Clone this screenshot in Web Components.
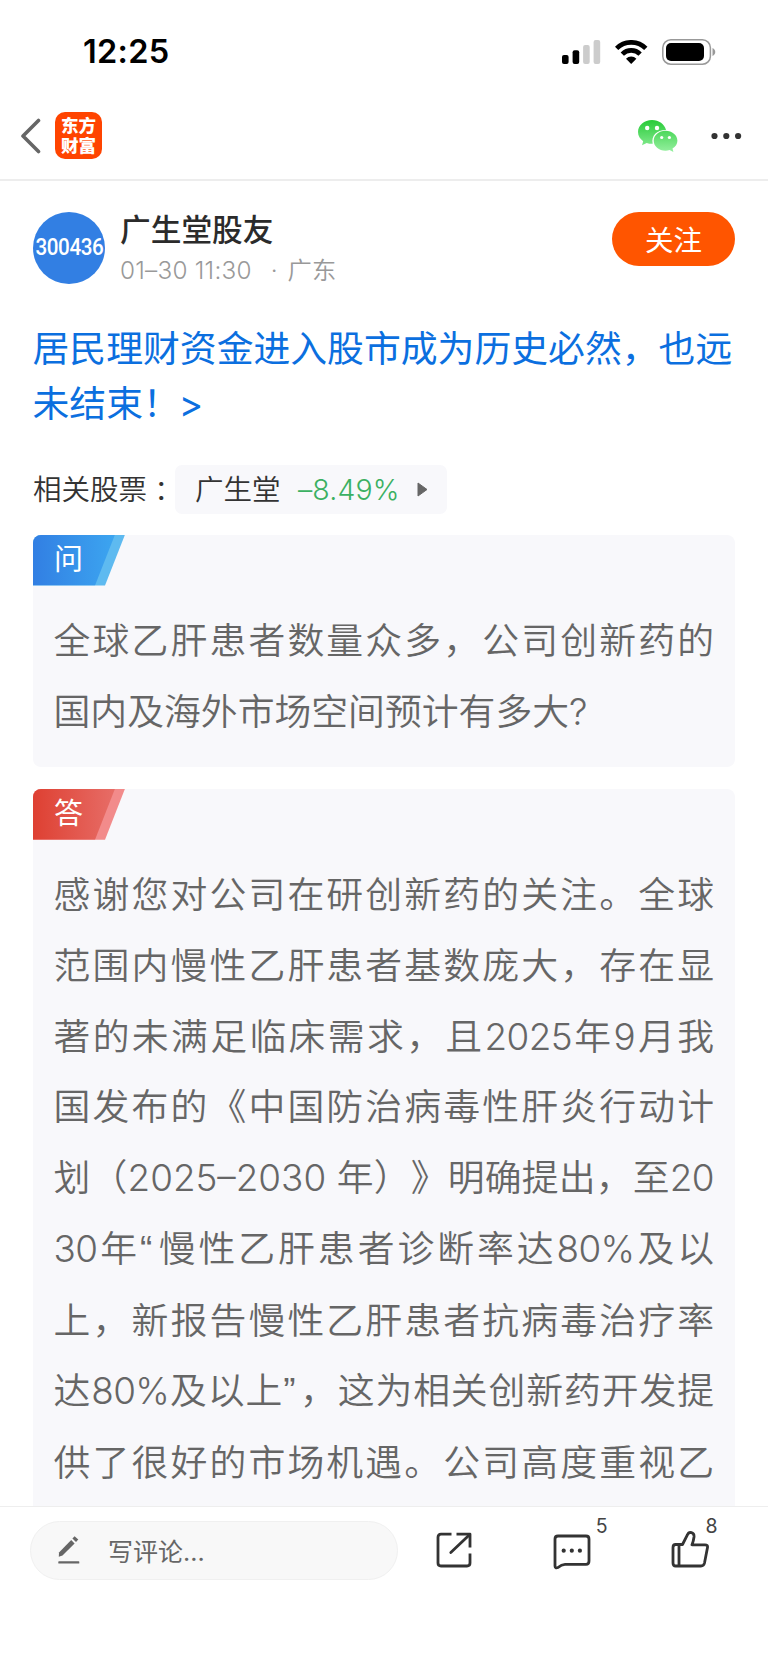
<!DOCTYPE html>
<html lang="zh-CN">
<head>
<meta charset="utf-8">
<meta name="viewport" content="width=device-width">
<title>广生堂股友</title>
<style>
  body {
    margin: 0;
    background: #fff;
    font-family: Inter, "Noto Sans CJK SC", sans-serif;
    color: #333;
    text-spacing-trim: space-all;
  }
  /* curly quotes and tighter figures inside the article text */
  .q {
    font-family: "Liberation Sans", sans-serif;
    letter-spacing: 3.5px;
  }
  .n { letter-spacing: -.6px; }
</style>
</head>
<body>
<post-page>
  <status-bar slot="top" time="12:25"></status-bar>
  <nav-bar slot="top"></nav-bar>
  <author-row code="300436" name="广生堂股友" date="01–30 11:30" place="广东"></author-row>
  <post-title>
    <div>居民理财资金进入股市成为历史必然，也远</div>
    <div>未结束！<span style="margin-left:-1px">&gt;</span></div>
  </post-title>
  <stock-row name="广生堂" change="–8.49%"></stock-row>
  <qa-card kind="ask" label="问">
    <div>全球乙肝患者数量众多，公司创新药的</div>
    <div class="end">国内及海外市场空间预计有多大?</div>
  </qa-card>
  <qa-card kind="answer" label="答">
    <div>感谢您对公司在研创新药的关注。全球</div>
    <div>范围内慢性乙肝患者基数庞大，存在显</div>
    <div>著的未满足临床需求，且<span class="n">2025</span>年9月我</div>
    <div>国发布的《中国防治病毒性肝炎行动计</div>
    <div>划（2025–2030 年）》明确提出，至<span class="n">20</span></div>
    <div><span class="n">30</span>年<span class="q">“</span>慢性乙肝患者诊断率达<span class="n">80%</span>及以</div>
    <div>上，新报告慢性乙肝患者抗病毒治疗率</div>
    <div>达<span class="n">80%</span>及以上<span class="q">”</span>，这为相关创新药开发提</div>
    <div>供了很好的市场机遇。公司高度重视乙</div>
  </qa-card>
  <comment-bar slot="bottom" comments="5" likes="8"></comment-bar>
</post-page>

<script>
class PostPage extends HTMLElement {
  constructor() {
    super();
    this.attachShadow({ mode: 'open' }).innerHTML = `<style>
      :host {
        display: flex;
        flex-direction: column;
        width: 768px;
        height: 1663px;
        overflow: hidden;
      }
      main {
        flex: 1;
        min-height: 0;
        overflow: hidden;
        padding: 31px 33px 0;
      }
    </style>
    <slot name="top"></slot>
    <main><slot></slot></main>
    <slot name="bottom"></slot>`;
  }
}

class StatusBar extends HTMLElement {
  connectedCallback() {
    this.attachShadow({ mode: 'open' }).innerHTML = `<style>
      :host {
        display: flex;
        align-items: center;
        justify-content: space-between;
        box-sizing: border-box;
        height: 103px;
        padding: 0 52px 0 83px;
        color: #000;
      }
      time {
        font-size: 32.5px;
        font-weight: 600;
        letter-spacing: .3px;
      }
      .icons {
        display: flex;
        align-items: center;
      }
      svg { display: block; }
      .wifi { margin: 0 14.5px; }
    </style>
    <time>${this.getAttribute('time')}</time>
    <div class="icons">
      <svg width="38.5" height="24" viewBox="0 0 38.5 24">
        <rect y="15" width="6.6" height="9" rx="2"/>
        <rect x="10.6" y="10.3" width="6.6" height="13.7" rx="2"/>
        <g fill="#ccc">
          <rect x="21.1" y="5" width="6.6" height="19" rx="2"/>
          <rect x="31.6" width="6.6" height="24" rx="2"/>
        </g>
      </svg>
      <svg class="wifi" width="32.4" height="24" viewBox="0 0 32.4 24">
        <g fill="none" stroke="#000" stroke-width="4.7">
          <path d="M1.6 8.4A20.6 20.6 0 0 1 30.8 8.4"/>
          <path d="M7.3 14.1A12.6 12.6 0 0 1 25.1 14.1"/>
        </g>
        <path d="M16.2 24L11 18.7A7.4 7.4 0 0 1 21.4 18.7Z"/>
      </svg>
      <svg width="54" height="26" viewBox="0 0 54 26">
        <rect x=".8" y=".8" width="47.6" height="24.4" rx="8" fill="none" stroke="#999" stroke-width="1.5"/>
        <rect x="4" y="4" width="38" height="18" rx="5"/>
        <path d="M50.5 9C54.2 10.4 54.2 15.6 50.5 17Z" fill="#999"/>
      </svg>
    </div>`;
  }
}

class NavBar extends HTMLElement {
  constructor() {
    super();
    this.attachShadow({ mode: 'open' }).innerHTML = `<style>
      :host {
        display: flex;
        align-items: center;
        box-sizing: border-box;
        height: 78px;
        padding: 2px 26px 12px 20px;
        border-bottom: 2px solid #ededed;
      }
      svg { display: block; }
      .logo {
        box-sizing: border-box;
        width: 47px;
        height: 47px;
        margin: -1px auto 0 14px;
        padding: 3px 5.5px 0 6px;
        border-radius: 10px;
        background: #ff4400;
        color: #fff;
        font: 900 17.5px/19.5px "Noto Sans CJK SC", sans-serif;
        word-break: break-all;
      }
      .more { margin-left: 33px; }
    </style>
    <svg width="21" height="36" viewBox="0 0 21 36">
      <path d="M18.5 2.5L3 18L18.5 33.5" fill="none" stroke="#666" stroke-width="3.6" stroke-linecap="round" stroke-linejoin="round"/>
    </svg>
    <div class="logo">东方财富</div>
    <svg width="40" height="32" viewBox="0 0 40 32">
      <defs>
        <linearGradient id="wx" gradientUnits="userSpaceOnUse" x1="0" y1="0" x2="0" y2="32">
          <stop offset="0" stop-color="#28cb38"/>
          <stop offset="1" stop-color="#96f0a0"/>
        </linearGradient>
      </defs>
      <path fill="url(#wx)" d="M14 0C6.3 0 0 5.3 0 12c0 3.8 2 7 5.2 9.2L4 25.2l4.7-2.3c2 .7 4 .9 6 .8C13 15.5 19 9.8 28 9.9C26.5 4.2 21 0 14 0z"/>
      <path fill="url(#wx)" d="M27.5 10.8c-6.6 0-11.8 4.4-11.8 10s5.2 9.9 11.8 9.9c1.4 0 2.8-.2 4.1-.6l3.8 1.9-.9-3.4c3-1.9 4.9-4.7 4.9-7.9 0-5.500-5.300-9.900-11.900-9.900z"/>
      <g fill="#fff">
        <circle cx="9.2" cy="8" r="2.2"/>
        <circle cx="19" cy="8" r="2.2"/>
        <circle cx="23.7" cy="17.5" r="1.6"/>
        <circle cx="31.4" cy="17.5" r="1.6"/>
      </g>
    </svg>
    <svg class="more" width="31" height="8" viewBox="0 0 31 8" fill="#333">
      <circle cx="3.5" cy="4" r="3.1"/>
      <circle cx="15.3" cy="4" r="3.1"/>
      <circle cx="27.1" cy="4" r="3.1"/>
    </svg>`;
  }
}

class AuthorRow extends HTMLElement {
  connectedCallback() {
    this.attachShadow({ mode: 'open' }).innerHTML = `<style>
      :host {
        display: flex;
        align-items: flex-start;
        height: 72px;
      }
      .avatar {
        display: flex;
        align-items: center;
        justify-content: center;
        width: 72px;
        height: 72px;
        border-radius: 50%;
        background: #327fe3;
        color: #fff;
        font: 500 24px Roboto, sans-serif;
        letter-spacing: -.5px;
      }
      .avatar span {
        transform: translateY(-1px) scaleX(.86);
      }
      .info {
        flex: 1;
        margin-left: 15px;
      }
      .name {
        font-size: 30.7px;
        font-weight: 500;
        line-height: 36px;
        color: #2b2b2b;
      }
      .meta {
        display: flex;
        margin-top: 4px;
        font-size: 24.3px;
        font-weight: 350;
        line-height: 36px;
        color: #999;
      }
      .date { letter-spacing: .25px; }
      .dot { margin: 0 10px 0 19px; }
      button {
        width: 123px;
        height: 54px;
        border: 0;
        border-radius: 27px;
        padding: 0 0 2px;
        background: #ff5500;
        color: #fff;
        font: 400 28.5px "Noto Sans CJK SC", sans-serif;
      }
    </style>
    <div class="avatar"><span>${this.getAttribute('code')}</span></div>
    <div class="info">
      <div class="name">${this.getAttribute('name')}</div>
      <div class="meta">
        <span class="date">${this.getAttribute('date')}</span>
        <span class="dot">·</span>
        <span>${this.getAttribute('place')}</span>
      </div>
    </div>
    <button>关注</button>`;
  }
}

class PostTitle extends HTMLElement {
  constructor() {
    super();
    this.attachShadow({ mode: 'open' }).innerHTML = `<style>
      :host {
        display: block;
        margin-top: 37px;
        margin-left: -.5px;
        font-size: 36.85px;
        line-height: 55.3px;
        color: #0b6fdf;
        white-space: nowrap;
      }
    </style><slot></slot>`;
  }
}

class StockRow extends HTMLElement {
  connectedCallback() {
    this.attachShadow({ mode: 'open' }).innerHTML = `<style>
      :host {
        display: flex;
        align-items: center;
        height: 49px;
        margin: 33.5px 0 20.5px;
        font-size: 28.5px;
        font-weight: 350;
        line-height: 49px;
      }
      .colon {
        display: inline-block;
        font-family: "Noto Sans CJK TC", sans-serif;
        transform: translateY(2px);
      }
      .label {
        width: 142px;
        padding-bottom: 2px;
        white-space: nowrap;
      }
      .chip {
        display: flex;
        align-items: center;
        box-sizing: border-box;
        width: 272px;
        height: 49px;
        padding: 0 19.5px 0 20px;
        border-radius: 7px;
        background: #f8f8fb;
      }
      .change {
        margin: 0 auto 0 17.5px;
        color: #3bb062;
        letter-spacing: .1px;
      }
    </style>
    <span class="label">相关股票<span class="colon" lang="zh-TW">：</span></span>
    <div class="chip">
      <span>${this.getAttribute('name')}</span>
      <span class="change">${this.getAttribute('change')}</span>
      <svg width="11" height="15" viewBox="0 0 11 15"><path d="M1 1L10 7.5L1 14Z" fill="#666" stroke="#666" stroke-linejoin="round"/></svg>
    </div>`;
  }
}

class QaCard extends HTMLElement {
  connectedCallback() {
    const ask = this.getAttribute('kind') === 'ask';
    const [from, to, edge] = ask
      ? ['#327fe3', '#3ca5f0', '#5ebaf0']
      : ['#de4032', '#e76d67', '#f28b8b'];
    this.attachShadow({ mode: 'open' }).innerHTML = `<style>
      :host {
        display: block;
        margin-bottom: 21.5px;
        padding-bottom: 19.6px;
        border-radius: 8px;
        background: #f8f8fb;
        overflow: hidden;
      }
      .tag {
        width: 92px;
        height: 51px;
        background: ${edge};
        clip-path: polygon(0 0, 100% 0, 72px 100%, 0 100%);
      }
      .tag span {
        display: block;
        box-sizing: border-box;
        width: 82px;
        height: 51px;
        padding-left: 21px;
        background: linear-gradient(90deg, ${from}, ${to});
        clip-path: polygon(0 0, 100% 0, 62px 100%, 0 100%);
        color: #fff;
        font-size: 29px;
        line-height: 49.5px;
      }
      .text {
        padding: 20.5px 21px 0 20.5px;
        font-size: 36.85px;
        font-weight: 350;
        line-height: 70.75px;
        color: #666;
        white-space: nowrap;
      }
      ::slotted(div) {
        text-align: justify;
        text-align-last: justify;
      }
      ::slotted(.end) { text-align-last: left; }
    </style>
    <div class="tag"><span>${this.getAttribute('label')}</span></div>
    <div class="text"><slot></slot></div>`;
  }
}

class CommentBar extends HTMLElement {
  connectedCallback() {
    this.attachShadow({ mode: 'open' }).innerHTML = `<style>
      :host {
        display: flex;
        align-items: flex-start;
        box-sizing: border-box;
        height: 157px;
        padding: 14px 30px 0 29.5px;
        border-top: 1px solid #eee;
        background: #fff;
      }
      svg { display: block; }
      .input {
        display: flex;
        align-items: center;
        box-sizing: border-box;
        width: 368.5px;
        height: 59px;
        margin-right: 37.5px;
        padding: 0 0 2px 27px;
        border: 1px solid #f0f0f0;
        border-radius: 30px;
        background: #f8f8f8;
        color: #666;
        font-size: 25px;
      }
      .input span { margin-left: 28.5px; }
      .action {
        position: relative;
        width: 38px;
        margin: 9px 79.7px 0 0;
      }
      .action:last-child { margin-right: 0; }
      .count {
        position: absolute;
        left: 42.5px;
        top: -16px;
        font-size: 19.5px;
        line-height: 24px;
        color: #444;
      }
      .action:last-child .count { left: 34.5px; }
      .line {
        fill: none;
        stroke: #333;
        stroke-width: 2.8;
        stroke-linejoin: round;
        stroke-linecap: round;
      }
    </style>
    <div class="input">
      <svg width="22" height="29" viewBox="0 0 22 29" fill="#666">
        <path d="M13.2 5L16.6 8.4L4.5 20.5L.8 21.8L1 17.4Z"/>
        <path d="M14.4 3.6L16.6 1.2L20.3 4.6L18 7Z"/>
        <rect x=".3" y="26.3" width="21" height="2.3" rx=".6"/>
      </svg>
      <span>写评论...</span>
    </div>
    <div class="action">
      <svg width="38" height="40" viewBox="0 0 38 40">
        <g class="line" style="stroke-linecap:butt">
          <path d="M15.5 4.2H5Q2 4.2 2 7.2V33Q2 36 5 36H31Q34 36 34 33V23.5"/>
          <path d="M20.5 4.2H34V17.5"/>
          <path d="M33.5 4.8L14.8 22.5" stroke-linecap="round"/>
        </g>
      </svg>
    </div>
    <div class="action">
      <svg width="38" height="40" viewBox="0 0 38 40">
        <path class="line" d="M5 6H33Q36 6 36 9V31Q36 34.3 33 34.3H12Q8.5 34.3 5 37.5Q2 38.5 2 36V9Q2 6 5 6Z"/>
        <g fill="#333"><circle cx="10.7" cy="20.7" r="2.1"/><circle cx="18.8" cy="20.7" r="2.1"/><circle cx="26.9" cy="20.7" r="2.1"/></g>
      </svg>
      <span class="count">${this.getAttribute('comments')}</span>
    </div>
    <div class="action">
      <svg width="38" height="40" viewBox="0 0 38 40">
        <path class="line" d="M4.6 14.5H11.5L16.5 4.7C18 1.2 23.5 2 23 7Q22.5 11 21 14.8H34Q37 14.8 36.5 17.5L33.5 33Q32.8 36 30 36H4.6Q2 36 2 33V17.5Q2 14.5 4.6 14.5ZM8 14.5V36"/>
      </svg>
      <span class="count">${this.getAttribute('likes')}</span>
    </div>`;
  }
}

customElements.define('post-page', PostPage);
customElements.define('status-bar', StatusBar);
customElements.define('nav-bar', NavBar);
customElements.define('author-row', AuthorRow);
customElements.define('post-title', PostTitle);
customElements.define('stock-row', StockRow);
customElements.define('qa-card', QaCard);
customElements.define('comment-bar', CommentBar);
</script>
</body>
</html>
